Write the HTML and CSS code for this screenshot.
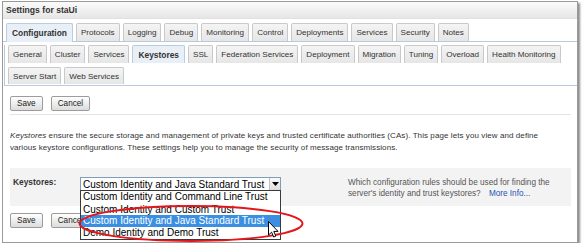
FILE: index.html
```html
<!DOCTYPE html>
<html>
<head>
<meta charset="utf-8">
<link rel="stylesheet" href="styles.css">
</head>
<body>
<div class="window">
  <div class="titlebar">Settings for staUi</div>
  <div class="tabs tabs-top">
    <span class="tab active">Configuration</span>
    <span class="tab">Protocols</span>
    <span class="tab">Logging</span>
    <span class="tab">Debug</span>
    <span class="tab">Monitoring</span>
    <span class="tab">Control</span>
    <span class="tab">Deployments</span>
    <span class="tab">Services</span>
    <span class="tab">Security</span>
    <span class="tab">Notes</span>
  </div>
  <div class="subpanel">
    <div class="tabs tabs-sub">
      <span class="tab">General</span>
      <span class="tab">Cluster</span>
      <span class="tab">Services</span>
      <span class="tab active">Keystores</span>
      <span class="tab">SSL</span>
      <span class="tab">Federation Services</span>
      <span class="tab">Deployment</span>
      <span class="tab">Migration</span>
      <span class="tab">Tuning</span>
      <span class="tab">Overload</span>
      <span class="tab">Health Monitoring</span>
    </div>
    <div class="tabs tabs-sub row3">
      <span class="tab">Server Start</span>
      <span class="tab">Web Services</span>
    </div>
  </div>
  <div class="content">
    <div class="buttons">
      <span class="btn">Save</span>
      <span class="btn">Cancel</span>
    </div>
    <div class="rule"></div>
    <p class="intro"><em>Keystores</em> ensure the secure storage and management of private keys and trusted certificate authorities (CAs). This page lets you view and define<br>various keystore configurations. These settings help you to manage the security of message transmissions.</p>
    <div class="field-row">
      <div class="label">Keystores:</div>
      <div class="select">
        <span class="select-text">Custom Identity and Java Standard Trust</span>
        <span class="select-arrow"><svg width="7" height="4" viewBox="0 0 7 4"><path d="M0 0H7L3.5 4Z" fill="#000"/></svg></span>
      </div>
      <div class="help">Which configuration rules should be used for finding the<br>server's identity and trust keystores? <a class="more">More Info...</a></div>
    </div>
    <div class="buttons bottom">
      <span class="btn">Save</span>
      <span class="btn">Cancel</span>
    </div>
    <div class="dropdown">
      <div class="opt">Custom Identity and Command Line Trust</div>
      <div class="opt clipped"><span>Custom Identity and Custom Trust</span></div>
      <div class="opt sel">Custom Identity and Java Standard Trust</div>
      <div class="opt">Demo Identity and Demo Trust</div>
    </div>
    <svg class="ring" width="228" height="40" viewBox="0 0 228 40"><ellipse cx="114" cy="19.5" rx="111.5" ry="17.5" fill="none" stroke="#e3161b" stroke-width="2"/></svg>
    <svg class="cursor" width="11" height="17" viewBox="0 0 11 17"><path d="M0.5 0.5V14L3.6 11.2L5.7 16L7.8 15.1L5.8 10.4H10Z" fill="#fff" stroke="#000" stroke-width="1" stroke-linejoin="round"/></svg>
  </div>
</div>
</body>
</html>
```
FILE: styles.css
```css
* { box-sizing: border-box; }
html, body { margin: 0; padding: 0; background: #fff; }
body {
  font-family: "Liberation Sans", Arial, sans-serif;
  color: #333;
}
.window {
  position: relative;
  margin: 1px 0 0 2px;
  width: 576px;
  height: 242px;
  border: 1px solid #9a9a9a;
  box-shadow: 2px 2px 2px rgba(0,0,0,0.45);
  background: #fff;
  overflow: visible;
}
.titlebar {
  height: 17px;
  line-height: 17px;
  padding-left: 3px;
  font-weight: bold;
  font-size: 8.6px;
  color: #333;
  background: linear-gradient(#fbfbfb, #e6e6e6);
  border-bottom: 1px solid #e0e0e0;
}
.tabs {
  display: flex;
  align-items: flex-end;
  gap: 3px;
}
.tab {
  display: flex;
  align-items: center;
  padding: 0 4px;
  font-size: 8.1px;
  color: #333;
  background: linear-gradient(#f4f4f4, #e6e6e6);
  border: 1px solid #c9c9c9;
  border-bottom: none;
  border-radius: 2px 2px 0 0;
  white-space: nowrap;
}
.tab.active {
  font-weight: bold;
  font-size: 8.4px;
  padding: 0 5px;
  background: #e9eff6;
  border-color: #b9cde0;
}
.tabs-top {
  margin-top: 4px;
  height: 19px;
  padding-left: 3px;
  border-bottom: 1px solid #b7cbdf;
}
.tabs-top .tab { height: 18px; }
.tabs-top .tab.active { height: 19px; margin-bottom: -1px; }
.subpanel {
  margin-left: 1px;
  border-left: 1px solid #b7cbdf;
  border-bottom: 1px solid #b7cbdf;
  padding-left: 3px;
  padding-bottom: 1px;
}
.tabs-sub {
  margin-top: 3px;
  height: 18px;
}
.tabs-sub .tab { height: 18px; }
.tabs-sub.row3 { margin-top: 4px; height: 17px; }
.tabs-sub.row3 .tab { height: 17px; }
.content {
  position: relative;
  padding: 10px 6px 0 7px;
}
.buttons {
  display: flex;
  gap: 8px;
}
.btn {
  display: flex;
  align-items: center;
  justify-content: center;
  height: 15px;
  padding: 0 6px;
  font-size: 8.2px;
  color: #222;
  background: linear-gradient(#ffffff, #dcdcdc);
  border: 1px solid #9c9c9c;
  border-radius: 2px;
}
.rule {
  margin-top: 3px;
  height: 1px;
  background: #e4e4e4;
}
.intro {
  margin: 15px 0 0 0;
  font-size: 8px;
  letter-spacing: 0.08px;
  line-height: 12px;
  color: #333;
}
.field-row {
  margin-top: 14px;
  height: 38px;
  background: #f3f3f3;
  display: flex;
  align-items: flex-start;
}
.label {
  margin: 9px 0 0 3px;
  width: 67px;
  font-weight: bold;
  font-size: 8.4px;
  color: #333;
}
.select {
  margin-top: 9px;
  width: 201px;
  height: 14px;
  border: 1px solid #7f9db9;
  background: #fff;
  display: flex;
  align-items: center;
  justify-content: space-between;
}
.select-text {
  padding-left: 2px;
  font-size: 10px;
  color: #000;
}
.select-arrow {
  width: 11px;
  height: 12px;
  background: linear-gradient(#fafafa, #dedede);
  border-left: 1px solid #c0c0c0;
  display: flex;
  align-items: center;
  justify-content: center;
}
.help {
  margin: 9px 0 0 67px;
  font-size: 8.2px;
  line-height: 11px;
  color: #555;
}
.more { color: #2455b0; margin-left: 6px; }
.buttons.bottom { margin-top: 7px; }
.dropdown {
  position: absolute;
  left: 77px;
  top: 104px;
  width: 201px;
  border: 1px solid #3a3a3a;
  background: #fff;
}
.opt {
  height: 12px;
  line-height: 12px;
  padding-left: 2px;
  font-size: 10px;
  color: #000;
  white-space: nowrap;
  overflow: hidden;
}
.opt.clipped span { position: relative; top: 1px; }
.opt.sel { background: #3b8fe3; color: #fff; }
.ring {
  position: absolute;
  left: 74px;
  top: 118px;
}
.cursor {
  position: absolute;
  left: 265px;
  top: 135px;
}
```
